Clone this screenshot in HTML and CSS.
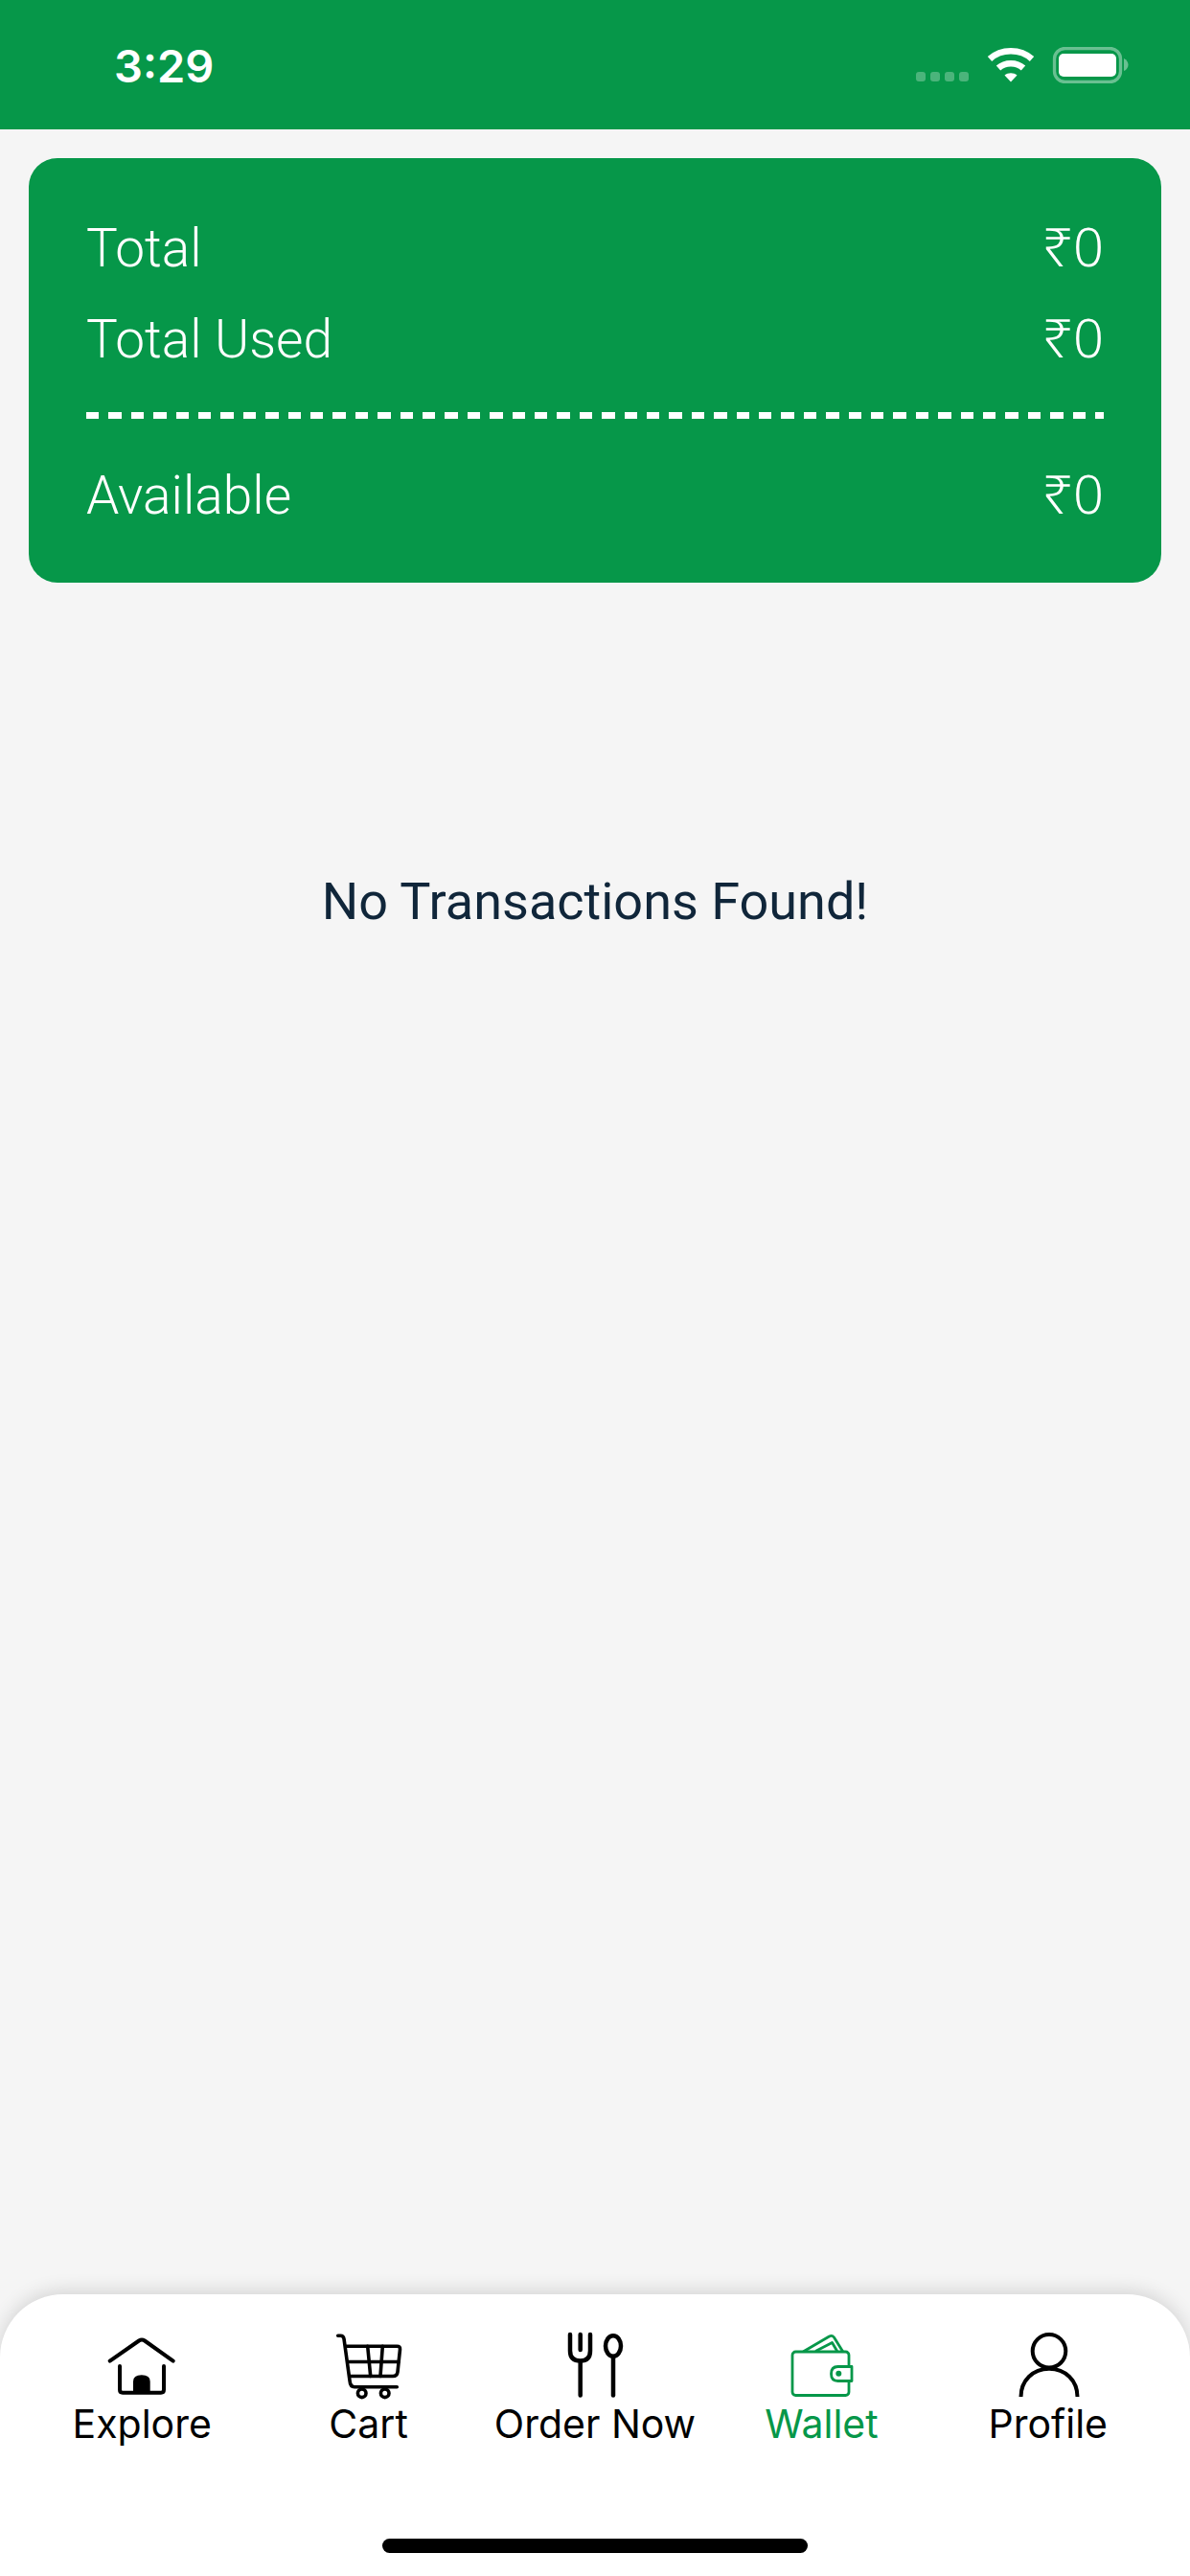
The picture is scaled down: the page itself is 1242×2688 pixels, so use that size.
FILE: index.html
```html
<!DOCTYPE html>
<html lang="en">
<head>
    <meta charset="UTF-8">
    <meta name="viewport" content="width=device-width, initial-scale=1.0">
    <title>Wallet</title>
    <link rel="stylesheet" href="styles.css">
</head>
<body>
    <div class="app">
        <div class="status-bar">
            <span class="status-time">3:29</span>
            <svg class="status-icons" viewBox="0 0 222 38" fill="none">
                <g fill="#fff" fill-opacity="0.28">
                    <rect x="0" y="26" width="10" height="10" rx="3"></rect>
                    <rect x="15" y="26" width="10" height="10" rx="3"></rect>
                    <rect x="30" y="26" width="10" height="10" rx="3"></rect>
                    <rect x="45" y="26" width="10" height="10" rx="3"></rect>
                </g>
                <g stroke="#fff" stroke-width="6.5">
                    <path d="M77 12.5C89 1.5 109 1.5 121 12.5"></path>
                    <path d="M86 22C93 15.5 105 15.5 112 22"></path>
                </g>
                <path d="M99 36.5L92.500 29.500C96 26.500 102 26.500 105.500 29.500Z" fill="#fff"></path>
                <rect x="144.500" y="1.500" width="69" height="35" rx="11" stroke="#fff" stroke-opacity="0.4" stroke-width="3.300"></rect>
                <rect x="149" y="7" width="60" height="24" rx="5" fill="#fff"></rect>
                <path d="M217 12C220 13.500 221.500 16 221.500 18.500C221.500 21 220 24 217 25Z" fill="#fff" fill-opacity="0.4"></path>
            </svg>
        </div>

        <div class="summary-card">
            <div class="summary-row">
                <span>Total</span>
                <span class="amount">₹0</span>
            </div>
            <div class="summary-row summary-row-used">
                <span>Total Used</span>
                <span class="amount">₹0</span>
            </div>
            <div class="summary-divider"></div>
            <div class="summary-row">
                <span>Available</span>
                <span class="amount">₹0</span>
            </div>
        </div>

        <p class="no-results">No Transactions Found!</p>

        <nav class="tab-bar">
            <div class="tabs">
                <div class="tab">
                    <svg class="tab-icon" viewBox="0 0 72 72" fill="none" stroke="currentColor" stroke-width="4" stroke-linecap="round" stroke-linejoin="round">
                        <path d="M2.700 31.700L33 10.500Q36 8.700 39 10.500L68.700 31.700"></path>
                        <path d="M13 37V61.500Q13 64.700 16 64.700H56Q59 64.700 59 61.500V37"></path>
                        <path d="M27 64.700V53Q27 46.300 35.800 46.300Q44.700 46.300 44.700 53V64.700Z" fill="currentColor" stroke="none"></path>
                    </svg>
                    <span>Explore</span>
                </div>
                <div class="tab">
                    <svg class="tab-icon" viewBox="0 0 72 72" fill="none" stroke="currentColor" stroke-width="3.600" stroke-linecap="round" stroke-linejoin="round">
                        <path d="M3.700 5.300H6.500Q9.500 5.300 10 8.500L16 52Q16.500 58.700 21 58.700H65.300"></path>
                        <path d="M12.500 16.300H65.500Q68.700 16.300 68.500 19.500L66 43Q65.500 47.500 61 47.500H16.500"></path>
                        <path d="M34.700 16.300L37.700 47.500M50.300 16.300L48 47.500M14.700 32.500H67"></path>
                        <circle cx="28.700" cy="65.300" r="4.300"></circle>
                        <circle cx="52.700" cy="65.300" r="4.300"></circle>
                    </svg>
                    <span>Cart</span>
                </div>
                <div class="tab">
                    <svg class="tab-icon" viewBox="0 0 72 72" fill="none" stroke="currentColor" stroke-width="4.500" stroke-linecap="round" stroke-linejoin="round">
                        <path d="M10 4V21Q10 31.500 20.700 31.500Q31 31.500 31 21V4"></path>
                        <path d="M20.700 4V20M20.700 32V67.500"></path>
                        <ellipse cx="55" cy="16" rx="8" ry="10.800"></ellipse>
                        <path d="M55 27V67.500"></path>
                    </svg>
                    <span>Order Now</span>
                </div>
                <div class="tab tab-active">
                    <svg class="tab-icon" viewBox="0 0 72 72" fill="none" stroke="currentColor" stroke-width="2.800" stroke-linecap="round" stroke-linejoin="round">
                        <rect x="6" y="22" width="59" height="45.500" rx="3.500"></rect>
                        <path d="M18 21.500L44.500 6Q47.500 4.500 49.500 7L58.500 21.500"></path>
                        <path d="M31 21L47.500 12.500L52.500 21"></path>
                        <path d="M68 37.500H53.500Q46.500 37.500 46.500 45Q46.500 52.500 53.500 52.500H68Z" fill="#fff"></path>
                        <circle cx="54.300" cy="44.800" r="3" fill="currentColor" stroke="none"></circle>
                    </svg>
                    <span>Wallet</span>
                </div>
                <div class="tab">
                    <svg class="tab-icon" viewBox="0 0 72 72" fill="none" stroke="currentColor" stroke-width="4">
                        <circle cx="37" cy="21.300" r="17.300"></circle>
                        <path d="M7.500 69C7.500 52 20 39.700 37 39.700C54 39.700 66.500 52 66.500 69"></path>
                    </svg>
                    <span>Profile</span>
                </div>
            </div>
            <div class="home-indicator"></div>
        </nav>
    </div>
</body>
</html>
```

FILE: styles.css
```css
body {
    margin: 0;
    background: #f5f5f5;
}

.app {
    display: flex;
    flex-direction: column;
    height: 2688px;
    overflow: hidden;
    font-family: Roboto, "Liberation Sans", sans-serif;
}

.status-bar {
    display: flex;
    justify-content: space-between;
    flex-shrink: 0;
    height: 135px;
    box-sizing: border-box;
    padding: 49px 64px 0 119px;
    background: #069749;
}

.status-time {
    font-family: Inter, sans-serif;
    font-size: 47px;
    font-weight: 600;
    line-height: 40px;
    color: white;
}

.status-icons {
    width: 222px;
    height: 38px;
}

.summary-card {
    margin: 30px 30px 0;
    padding: 59px 60px 62px;
    border-radius: 30px;
    background: #069749;
    color: white;
}

.summary-row {
    display: flex;
    justify-content: space-between;
    align-items: baseline;
    height: 64px;
    font-size: 55px;
    font-weight: 300;
    line-height: 64px;
}

.amount {
    font-family: "Noto Sans", Roboto, sans-serif;
    font-size: 56px;
}

.summary-row-used {
    margin-top: 31px;
}

.summary-divider {
    height: 7px;
    margin: 47px 0 45px;
    background: repeating-linear-gradient(90deg, white 0 13.5px, transparent 13.5px 23.4px);
}

.no-results {
    margin: 301px 0 0;
    font-size: 54px;
    line-height: 64px;
    text-align: center;
    color: #10263a;
}

.tab-bar {
    flex-shrink: 0;
    height: 294px;
    box-sizing: border-box;
    margin-top: auto;
    padding: 38px 30px 0;
    border-radius: 66px 66px 0 0;
    background: white;
    box-shadow: 0 -3px 20px rgba(0, 0, 0, 0.14);
}

.tabs {
    display: grid;
    grid-template-columns: repeat(5, 1fr);
}

.tab {
    display: flex;
    flex-direction: column;
    align-items: center;
    font-family: Inter, sans-serif;
    font-size: 41px;
    line-height: 50px;
    color: black;
}

.tab-active {
    color: #069749;
}

.tab-icon {
    width: 72px;
    height: 72px;
    display: block;
}

.home-indicator {
    width: 444px;
    height: 15px;
    margin: 95px auto 0;
    border-radius: 8px;
    background: black;
}
```
